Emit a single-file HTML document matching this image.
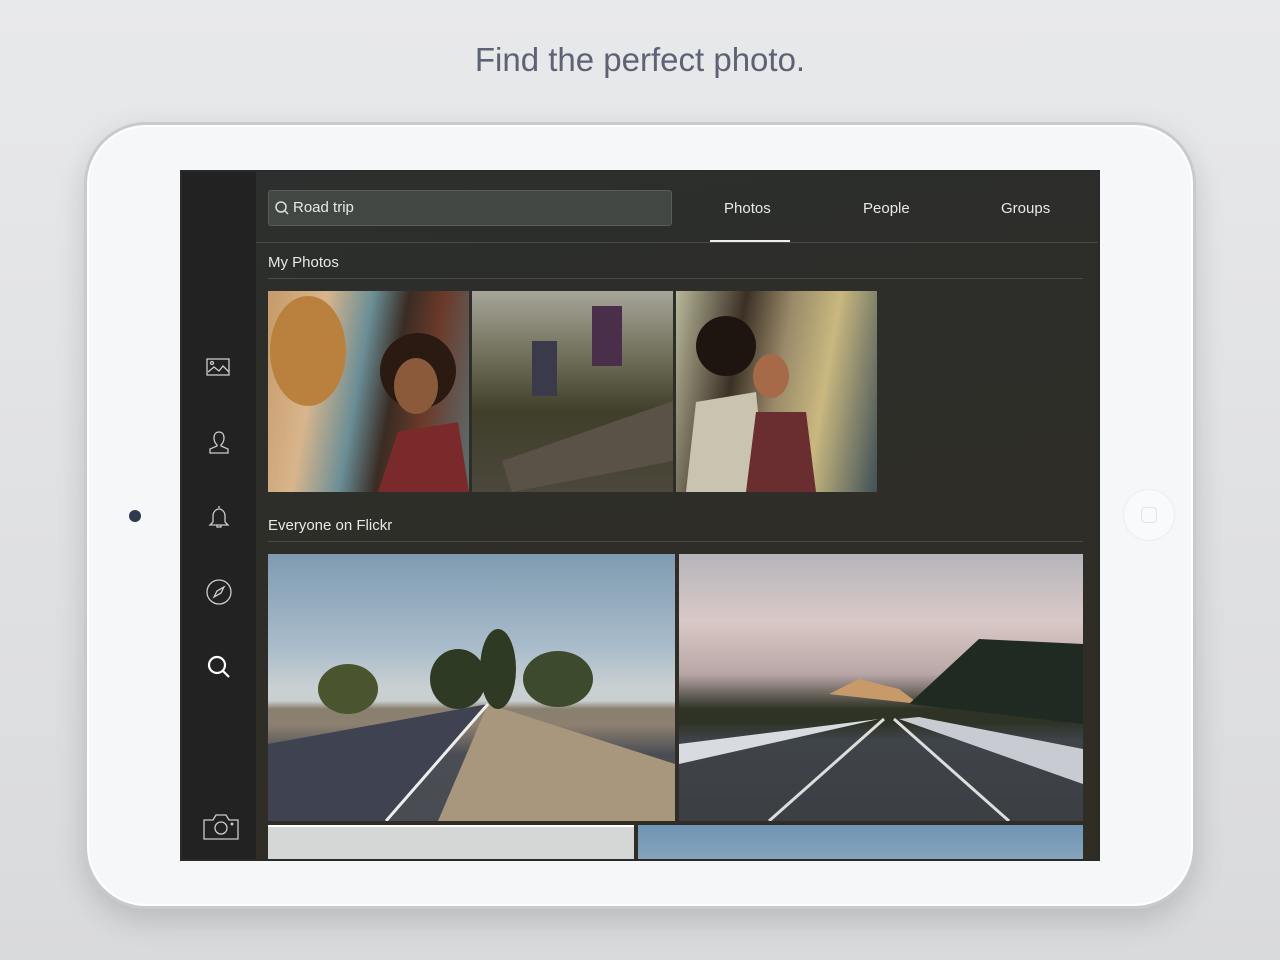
<!DOCTYPE html>
<html><head><meta charset="utf-8"><style>
*{margin:0;padding:0;box-sizing:border-box}
body{width:1280px;height:960px;overflow:hidden;background:linear-gradient(#e8e9eb,#d9dadc);font-family:"Liberation Sans",sans-serif;position:relative}
.title{position:absolute;top:41px;width:100%;text-align:center;font-size:33px;color:#5d6275;font-weight:300;letter-spacing:0}
.ipad{position:absolute;left:84px;top:122px;width:1112px;height:787px;border-radius:62px;background:#f6f7f9;border:3px solid #c9cacc;box-shadow:0 12px 30px rgba(0,0,0,.15),inset 0 0 0 2px #fff}
.cam{position:absolute;left:129px;top:510px;width:12px;height:12px;border-radius:50%;background:#2f3a4f}
.home{position:absolute;left:1124px;top:490px;width:50px;height:50px;border-radius:50%;background:#f9fafb;box-shadow:0 0 2px #ddd}
.home div{position:absolute;left:17px;top:17px;width:16px;height:16px;border:1px solid #e3e3e3;border-radius:4px}
.screen{position:absolute;left:180px;top:170px;width:920px;height:691px;background:linear-gradient(170deg,#2c2f2d,#2e2d27 60%,#302d24);overflow:hidden;border:2px solid #2a2a2a}
.side{position:absolute;left:0;top:0;width:74px;height:100%;background:#222}
.side svg{position:absolute;left:23px}
.t{position:absolute;color:#e8e8e8;font-size:15px}
.search{position:absolute;left:86px;top:18px;width:404px;height:36px;border:1px solid #5a5d5a;border-radius:3px;background:#434743}
.line{position:absolute;height:1px;background:#4a4b46}
.p{position:absolute;overflow:hidden}
.p svg{position:absolute;left:0;top:0}
</style></head><body>
<div class="title">Find the perfect photo.</div>
<div class="ipad"></div>
<div class="cam"></div>
<div class="home"><div></div></div>
<div class="screen">
<div class="side">
<svg style="top:185px" width="28" height="22" viewBox="0 0 28 22" fill="none" stroke="#ccc" stroke-width="1.3"><rect x="2" y="2" width="22" height="16"/><circle cx="7" cy="6" r="1.5"/><path d="M3 15l6-5 5 4 4-5 6 6"/></svg>
<svg style="top:257px" width="28" height="28" viewBox="0 0 28 28" fill="none" stroke="#ccc" stroke-width="1.3"><path d="M14 3c3 0 5 2 5 6s-2 6-3 7v1l7 3v4H5v-4l7-3v-1c-1-1-3-3-3-7s2-6 5-6z"/></svg>
<svg style="top:332px" width="28" height="28" viewBox="0 0 28 28" fill="none" stroke="#ccc" stroke-width="1.3"><path d="M14 2v2M8 12c0-4 3-7 6-7s6 3 6 7v6l3 3H5l3-3z"/><path d="M12 21v2h4v-2"/></svg>
<svg style="top:406px" width="28" height="28" viewBox="0 0 28 28" fill="none" stroke="#ccc" stroke-width="1.3"><circle cx="14" cy="14" r="12"/><path d="M19 9l-7 4-3 6 7-4z"/></svg>
<svg style="top:481px" width="28" height="28" viewBox="0 0 28 28" fill="none" stroke="#fff" stroke-width="2.2"><circle cx="12" cy="12" r="8"/><path d="M18 18l6 6"/></svg>
<svg style="top:640px;left:20px" width="38" height="30" viewBox="0 0 38 30" fill="none" stroke="#ccc" stroke-width="1.3"><path d="M2 8h9l3-5h10l3 5h9v19H2z"/><circle cx="19" cy="16" r="6"/><circle cx="30" cy="12" r=".8"/></svg>
</div>
<div class="search"><svg style="position:absolute;left:5px;top:9px" width="16" height="16" viewBox="0 0 16 16" fill="none" stroke="#ddd" stroke-width="1.5"><circle cx="7" cy="7" r="5"/><path d="M11 11l3 3"/></svg><span class="t" style="left:24px;top:8px">Road trip</span></div>
<span class="t" style="left:542px;top:28px">Photos</span>
<span class="t" style="left:681px;top:28px">People</span>
<span class="t" style="left:819px;top:28px">Groups</span>
<div style="position:absolute;left:528px;top:68px;width:80px;height:2px;background:#eee"></div>
<div class="line" style="left:74px;top:70px;width:846px"></div>
<span class="t" style="left:86px;top:82px">My Photos</span>
<div class="line" style="left:86px;top:106px;width:815px"></div>
<div class="p" style="left:86px;top:119px;width:201px;height:201px;background:linear-gradient(100deg,#c69a6a 0%,#d8b58c 25%,#6a8e96 45%,#3a2c24 60%,#6b3a2a 75%,#5c6f72 100%)"><svg width="201" height="201"><circle cx="150" cy="80" r="38" fill="#2a1a12"/><ellipse cx="148" cy="95" rx="22" ry="28" fill="#8a5a3a"/><path d="M110 201l20-60 60-10 11 70z" fill="#7a2a2a"/><ellipse cx="40" cy="60" rx="38" ry="55" fill="#b9803e"/></svg></div>
<div class="p" style="left:290px;top:119px;width:201px;height:201px;background:linear-gradient(#a7a59a 0%,#6c6b55 35%,#3f3f2a 60%,#4c473c 100%)"><svg width="201" height="201"><path d="M30 170L201 110v60L40 201z" fill="#5a5246"/><rect x="120" y="15" width="30" height="60" fill="#4a2f4a"/><rect x="60" y="50" width="25" height="55" fill="#3a3a4a"/></svg></div>
<div class="p" style="left:494px;top:119px;width:201px;height:201px;background:linear-gradient(100deg,#b8b89a 0%,#3b3025 30%,#9a8a6a 50%,#c9b87f 70%,#3f5057 100%)"><svg width="201" height="201"><circle cx="50" cy="55" r="30" fill="#1e1510"/><path d="M10 201l10-90 60-10 10 100z" fill="#c9c4b0"/><ellipse cx="95" cy="85" rx="18" ry="22" fill="#a66a48"/><path d="M70 201l10-80 50 0 10 80z" fill="#6a2e30"/></svg></div>
<span class="t" style="left:86px;top:345px">Everyone on Flickr</span>
<div class="line" style="left:86px;top:369px;width:815px"></div>
<div class="p" style="left:86px;top:382px;width:407px;height:267px;background:linear-gradient(#7f9bb1 0%,#a9bccb 35%,#c9d0d2 50%,#c9cfd0 55%,#8a8070 58%,#8c8070 64%,#4b4d55 75%,#4a4c54 100%)"><svg width="407" height="267"><path d="M0 190L220 150 120 267H0z" fill="#3f4250"/><path d="M220 150L170 267h237V210z" fill="#a8977c"/><path d="M220 150L118 267" stroke="#eee" stroke-width="3"/><ellipse cx="190" cy="125" rx="28" ry="30" fill="#2f3a25"/><ellipse cx="230" cy="115" rx="18" ry="40" fill="#2f3a25"/><ellipse cx="290" cy="125" rx="35" ry="28" fill="#3d4a2e"/><ellipse cx="80" cy="135" rx="30" ry="25" fill="#4a5530"/></svg></div>
<div class="p" style="left:497px;top:382px;width:404px;height:267px;background:linear-gradient(#b6b5bb 0%,#d9c9c6 25%,#b9a6a6 45%,#2e3326 58%,#2e3326 63%,#3f444a 70%,#3b3f44 100%)"><svg width="404" height="267"><path d="M150 140l30-15 40 10 20 15z" fill="#c89a6a"/><path d="M230 150L300 85 404 90V170z" fill="#1f2a22"/><path d="M0 210L200 165 0 190z" fill="#d8dce0"/><path d="M220 165L404 230V195L240 163z" fill="#c8ccd2"/><path d="M215 165L330 267M205 165L90 267" stroke="#ddd" stroke-width="3"/></svg></div>
<div class="p" style="left:86px;top:653px;width:366px;height:40px;background:#d5d6d6;border-top:2px solid #fff"></div>
<div class="p" style="left:456px;top:653px;width:445px;height:40px;background:linear-gradient(#6f94b4,#8aa6bd)"></div>
</div>
</body></html>
